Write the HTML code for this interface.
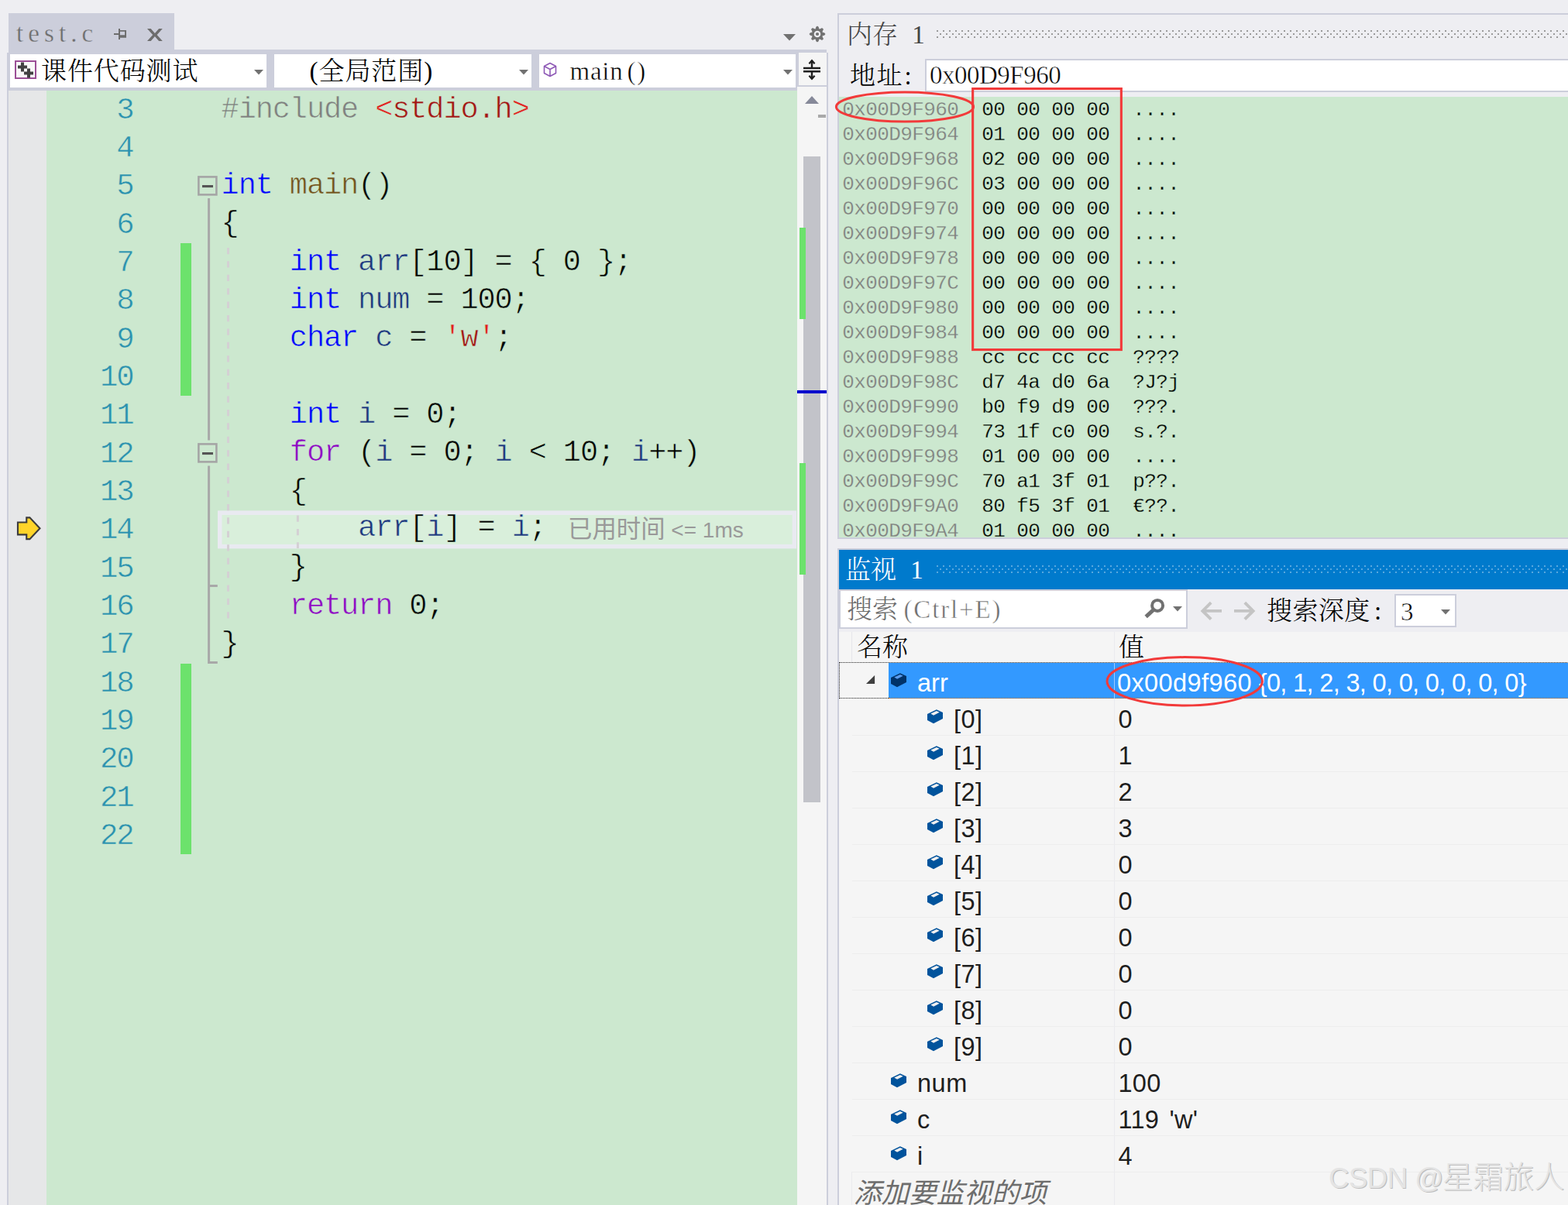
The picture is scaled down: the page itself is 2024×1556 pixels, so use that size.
<!DOCTYPE html>
<html lang="zh-CN">
<head>
<meta charset="utf-8">
<title>test.c - Visual Studio</title>
<style>
*{box-sizing:border-box;margin:0;padding:0}
html,body{width:2024px;height:1556px;overflow:hidden;background:#eeeef2}
body{position:relative;font-family:"Liberation Serif","Noto Serif CJK SC",serif;color:#000}
.a{position:absolute}
.t{position:absolute;white-space:pre;line-height:1}
.ui{font-family:"Liberation Serif","Noto Serif CJK SC",serif;font-size:33px;line-height:36px;font-weight:300}
.lat{font-family:"Liberation Serif",serif;font-size:33px;line-height:36px;-webkit-text-stroke:0.5px #fff}
.mono{font-family:"Liberation Mono",monospace}
.code{font-family:"Liberation Mono",monospace;font-size:38.6px;letter-spacing:-1.09px;line-height:49px;height:49px;white-space:pre;position:absolute;left:285.6px;-webkit-text-stroke:0.6px #cce8cf}
.ln{font-family:"Liberation Mono",monospace;font-size:39px;letter-spacing:-2.2px;line-height:49px;height:49px;position:absolute;left:60px;width:111.4px;margin-top:1.3px;text-align:right;color:#2b91af;white-space:pre;-webkit-text-stroke:0.55px #cce8cf}
.kw{color:#0000ff}.cf{color:#8f08c4}.id{color:#1f377f}.fn{color:#74531f}.st{color:#a31515}.sq{color:#e21f1f}.pp{color:#808080}
.mem{font-family:"Liberation Mono",monospace;font-size:26px;letter-spacing:-0.6px;line-height:32px;height:32px;white-space:pre;position:absolute;left:1088px;-webkit-text-stroke:0.3px #cce8cf}
.mem i{font-style:normal;color:#808080}
.w{position:absolute;font-family:"Liberation Sans",sans-serif;font-size:32.5px;line-height:47px;height:47px;white-space:pre;color:#1e1e1e}
.sep{position:absolute;left:1100px;width:924px;height:1px;background:#ededed}
</style>
</head>
<body>
<div id="editor">
<div class="a" style="left:11px;top:17px;width:214px;height:47px;background:#cccedb;"></div>
<div class="t lat" id="tabname" style="left:21px;top:25px;color:#6d6d6d;letter-spacing:6.1px;-webkit-text-stroke:0.4px #cccedb">test.c</div>
<svg class="a" style="left:145px;top:34px" width="22" height="20" viewBox="145 34 22 20"><g fill="#6d6d6d"><rect x="147" y="43" width="7" height="2"/><rect x="153" y="37" width="2" height="14"/><path d="M155 39h8v9.8h-8zM155 40.8v4.4h6.1v-4.4z" fill-rule="evenodd"/></g></svg>
<svg class="a" style="left:188px;top:35px" width="24" height="20" viewBox="188 35 24 20"><path d="M190 37h4.7L199.9 43.1L205.1 37h4.7L202.6 45L209.8 53h-4.7L199.9 46.9L194.7 53h-4.7L197.2 45Z" fill="#6d6d6d"/></svg>
<svg class="a" style="left:1011px;top:44px" width="16" height="9" viewBox="0 0 16 9"><path d="M0 0H16L8 8.5Z" fill="#717171"/></svg>
<svg class="a" style="left:1043px;top:32px" width="24" height="24" viewBox="-12 -12 24 24"><path d="M-2.44 -5.48L-0.85 -9.66L0.85 -9.66L2.44 -5.48ZM2.15 -5.60L6.24 -7.43L7.43 -6.24L5.60 -2.15ZM5.48 -2.44L9.66 -0.85L9.66 0.85L5.48 2.44ZM5.60 2.15L7.43 6.24L6.24 7.43L2.15 5.60ZM2.44 5.48L0.85 9.66L-0.85 9.66L-2.44 5.48ZM-2.15 5.60L-6.24 7.43L-7.43 6.24L-5.60 2.15ZM-5.48 2.44L-9.66 0.85L-9.66 -0.85L-5.48 -2.44ZM-5.60 -2.15L-7.43 -6.24L-6.24 -7.43L-2.15 -5.60Z" fill="#717171" stroke="#717171" stroke-width="1" stroke-linejoin="round"/><circle r="6.5" fill="#717171"/><circle r="4.3" fill="#eeeef2"/><circle r="2.1" fill="#717171"/></svg>
<div class="a" style="left:11px;top:64px;width:1056px;height:53px;background:#cccedb;"></div>
<div class="a" style="left:9px;top:68px;width:2px;height:1488px;background:#cccedb;"></div>
<div class="a" style="left:13px;top:70px;width:331px;height:43px;background:#fff;"></div>
<svg class="a" style="left:328px;top:90px" width="12" height="7" viewBox="0 0 12 7"><path d="M0 0H12L6 6.5Z" fill="#717171"/></svg>
<div class="a" style="left:354px;top:70px;width:332px;height:43px;background:#fff;"></div>
<svg class="a" style="left:670px;top:90px" width="12" height="7" viewBox="0 0 12 7"><path d="M0 0H12L6 6.5Z" fill="#717171"/></svg>
<div class="a" style="left:696px;top:70px;width:331px;height:43px;background:#fff;"></div>
<svg class="a" style="left:1011px;top:90px" width="12" height="7" viewBox="0 0 12 7"><path d="M0 0H12L6 6.5Z" fill="#717171"/></svg>
<svg class="a" style="left:19px;top:78px" width="28" height="24" viewBox="0 0 28 24"><rect x="1" y="1" width="26" height="22" fill="#f8f8f8" stroke="#9b4f96" stroke-width="2"/><path d="M8 2.5h4v4h4v4h-4v4h-4v-4h-4v-4h4zM16 10.5h4v4h4v4h-4v4h-4v-4h-4v-4h4z" fill="#424242"/></svg>
<div class="t ui" id="proj" style="left:53px;top:74px;letter-spacing:0.9px">课件代码测试</div>
<div class="t ui" id="scope" style="left:399.6px;top:74px;letter-spacing:0.9px">(全局范围<span style="margin-left:0.2px">)</span></div>
<svg class="a" style="left:701px;top:80px" width="18" height="20" viewBox="0 0 18 20"><path d="M9 1.5L16.5 5.5V14.5L9 18.5L1.5 14.5V5.5ZM1.5 5.5L9 9.5L16.5 5.5M9 9.5V18.5" fill="none" stroke="#8e59b6" stroke-width="1.6" stroke-linejoin="round"/></svg>
<div class="t lat" id="func" style="left:735.6px;top:74px;letter-spacing:0.7px">main<span style="margin-left:5.2px;letter-spacing:1.6px">()</span></div>
<div class="a" style="left:1031px;top:68px;width:36px;height:42px;background:#f5f5f5;"></div>
<svg class="a" style="left:1035px;top:75px" width="26" height="30" viewBox="0 0 26 30"><g stroke="#1e1e1e" fill="none" stroke-width="2.4"><path d="M2 13H24M2 17.2H24"/><path d="M13 3.4V13M13 17V26.6"/><path d="M9.4 7.2L13 3.2L16.6 7.2M9.4 22.8L13 26.8L16.6 22.8" stroke-width="2.2"/></g></svg>
<div class="a" style="left:11px;top:117px;width:49px;height:1439px;background:#e6e7e8;"></div>
<div class="a" style="left:60px;top:117px;width:969px;height:1439px;background:#cce8cf;"></div>
<div class="a" style="left:1029px;top:112px;width:38px;height:1444px;background:#f5f5f5;"></div>
<div class="a" style="left:1067px;top:68px;width:2px;height:1488px;background:#cccedb;"></div>
<svg class="a" style="left:1039px;top:124px" width="18" height="10" viewBox="0 0 18 10"><path d="M0 10H18L9 0Z" fill="#868999"/></svg>
<div class="a" style="left:1056px;top:148px;width:10px;height:4px;background:#a9a9a9;"></div>
<div class="a" style="left:1037px;top:202px;width:22px;height:834px;background:#c2c3c9;"></div>
<div class="a" style="left:1032px;top:294px;width:8px;height:118px;background:#6ce26c;"></div>
<div class="a" style="left:1032px;top:598px;width:8px;height:144px;background:#6ce26c;"></div>
<div class="a" style="left:1029px;top:504px;width:38px;height:4px;background:#0000cd;"></div>
<div class="a" style="left:233px;top:314px;width:14px;height:197px;background:#6ce26c;"></div>
<div class="a" style="left:233px;top:857px;width:14px;height:246px;background:#6ce26c;"></div>
<svg class="a" style="left:250px;top:220px" width="800" height="660" viewBox="250 220 800 660"><g fill="none" stroke="#a8a8a8" stroke-width="3"><path d="M269.6 256V568.6M269.6 601.6V857M269.6 756.5H280.8M269.6 855.5H280.8"/></g><rect x="283.75" y="662.15" width="741.6" height="43.5" fill="#d9efdb" stroke="#e9eaf1" stroke-width="5.5"/><g fill="none" stroke="#d4d0d4" stroke-width="3" stroke-dasharray="8.3 9.12"><path d="M294.5 319.9V798.5"/><path d="M384.4 665.5V708"/></g><rect x="256.4" y="228.4" width="23" height="23" fill="#cce8cf" stroke="#a5a5a5" stroke-width="2.6"/><rect x="261" y="239" width="14" height="3.1" fill="#555"/><rect x="256.4" y="573.4" width="23" height="23" fill="#cce8cf" stroke="#a5a5a5" stroke-width="2.6"/><rect x="261" y="584" width="14" height="3.1" fill="#555"/></svg>
<svg class="a" style="left:18px;top:662px" width="40" height="40" viewBox="18 662 40 40"><path d="M22.95 674.45H34.25V668.35H38.4L51.5 682.3L38.4 696.15H34.25V690.35H22.95Z" fill="#ffd42a" stroke="#3b3b3d" stroke-width="2.1" stroke-linejoin="miter"/></svg>
<div class="ln" style="top:117.50px">3</div>
<div class="code" style="top:117.50px"><span class="pp">#include</span> <span class="sq">&lt;</span><span class="st">stdio.h</span><span class="sq">&gt;</span></div>
<div class="ln" style="top:166.82px">4</div>
<div class="ln" style="top:216.14px">5</div>
<div class="code" style="top:216.14px"><span class="kw">int</span> <span class="fn">main</span>()</div>
<div class="ln" style="top:265.46px">6</div>
<div class="code" style="top:265.46px">{</div>
<div class="ln" style="top:314.78px">7</div>
<div class="code" style="top:314.78px">    <span class="kw">int</span> <span class="id">arr</span>[10] = { 0 };</div>
<div class="ln" style="top:364.10px">8</div>
<div class="code" style="top:364.10px">    <span class="kw">int</span> <span class="id">num</span> = 100;</div>
<div class="ln" style="top:413.42px">9</div>
<div class="code" style="top:413.42px">    <span class="kw">char</span> <span class="id">c</span> = <span class="sq">'</span><span class="st">w</span><span class="sq">'</span>;</div>
<div class="ln" style="top:462.74px">10</div>
<div class="ln" style="top:512.06px">11</div>
<div class="code" style="top:512.06px">    <span class="kw">int</span> <span class="id">i</span> = 0;</div>
<div class="ln" style="top:561.38px">12</div>
<div class="code" style="top:561.38px">    <span class="cf">for</span> (<span class="id">i</span> = 0; <span class="id">i</span> &lt; 10; <span class="id">i</span>++)</div>
<div class="ln" style="top:610.70px">13</div>
<div class="code" style="top:610.70px">    {</div>
<div class="ln" style="top:660.02px">14</div>
<div class="code" style="top:658.22px;-webkit-text-stroke-color:#d9efdb">        <span class="id">arr</span>[<span class="id">i</span>] = <span class="id">i</span>;</div>
<div class="ln" style="top:709.34px">15</div>
<div class="code" style="top:709.34px">    }</div>
<div class="ln" style="top:758.66px">16</div>
<div class="code" style="top:758.66px">    <span class="cf">return</span> 0;</div>
<div class="ln" style="top:807.98px">17</div>
<div class="code" style="top:807.98px">}</div>
<div class="ln" style="top:857.30px">18</div>
<div class="ln" style="top:906.62px">19</div>
<div class="ln" style="top:955.94px">20</div>
<div class="ln" style="top:1005.26px">21</div>
<div class="ln" style="top:1054.58px">22</div>
<div class="t" id="elapsed" style="left:733px;top:666px;font-family:'Liberation Sans','Noto Sans CJK SC',sans-serif;font-size:31.4px;line-height:36px;color:#999">已用时间<span style="font-size:28px"> &lt;= 1ms</span></div>
</div>
<div id="memory">
<div class="a" style="left:1081px;top:17px;width:943px;height:2px;background:#cccedb;"></div>
<div class="a" style="left:1081px;top:17px;width:2px;height:679px;background:#cccedb;"></div>
<div class="t ui" id="memtitle" style="left:1093px;top:27px;word-spacing:10px;color:#444">内存 1</div>
<svg class="a" style="left:1209px;top:39px" width="815" height="11" viewBox="0 0 815 11"><defs><pattern id="d1" width="8" height="8" patternUnits="userSpaceOnUse"><rect x="0" y="0" width="2" height="2" fill="#999"/><rect x="4" y="4" width="2" height="2" fill="#999"/></pattern></defs><rect width="815" height="10" fill="url(#d1)"/></svg>
<div class="t ui" id="addrlbl" style="left:1097px;top:80px;letter-spacing:1.5px">地址<span style="margin-left:1.6px">:</span></div>
<div class="a" style="left:1194px;top:76px;width:840px;height:43px;background:#fff;border:2px solid #cccedb"></div>
<div class="t lat" id="addr" style="left:1200px;top:79px;letter-spacing:-0.5px">0x00D9F960</div>
<div class="a" style="left:1083px;top:125px;width:941px;height:569px;background:#cce8cf;"></div>
<div class="a" style="left:1081px;top:694px;width:943px;height:2px;background:#cccedb;"></div>
<div class="a" style="left:1083px;top:125px;width:941px;height:569px;overflow:hidden">
<div class="mem" style="left:4.3px;top:1.4px"><i>0x00D9F960</i>  00 00 00 00  ....</div>
<div class="mem" style="left:4.3px;top:33.4px"><i>0x00D9F964</i>  01 00 00 00  ....</div>
<div class="mem" style="left:4.3px;top:65.4px"><i>0x00D9F968</i>  02 00 00 00  ....</div>
<div class="mem" style="left:4.3px;top:97.4px"><i>0x00D9F96C</i>  03 00 00 00  ....</div>
<div class="mem" style="left:4.3px;top:129.4px"><i>0x00D9F970</i>  00 00 00 00  ....</div>
<div class="mem" style="left:4.3px;top:161.4px"><i>0x00D9F974</i>  00 00 00 00  ....</div>
<div class="mem" style="left:4.3px;top:193.4px"><i>0x00D9F978</i>  00 00 00 00  ....</div>
<div class="mem" style="left:4.3px;top:225.4px"><i>0x00D9F97C</i>  00 00 00 00  ....</div>
<div class="mem" style="left:4.3px;top:257.4px"><i>0x00D9F980</i>  00 00 00 00  ....</div>
<div class="mem" style="left:4.3px;top:289.4px"><i>0x00D9F984</i>  00 00 00 00  ....</div>
<div class="mem" style="left:4.3px;top:321.4px"><i>0x00D9F988</i>  cc cc cc cc  ????</div>
<div class="mem" style="left:4.3px;top:353.4px"><i>0x00D9F98C</i>  d7 4a d0 6a  ?J?j</div>
<div class="mem" style="left:4.3px;top:385.4px"><i>0x00D9F990</i>  b0 f9 d9 00  ???.</div>
<div class="mem" style="left:4.3px;top:417.4px"><i>0x00D9F994</i>  73 1f c0 00  s.?.</div>
<div class="mem" style="left:4.3px;top:449.4px"><i>0x00D9F998</i>  01 00 00 00  ....</div>
<div class="mem" style="left:4.3px;top:481.4px"><i>0x00D9F99C</i>  70 a1 3f 01  p??.</div>
<div class="mem" style="left:4.3px;top:513.4px"><i>0x00D9F9A0</i>  80 f5 3f 01  €??.</div>
<div class="mem" style="left:4.3px;top:545.4px"><i>0x00D9F9A4</i>  01 00 00 00  ....</div>
</div>
<svg class="a" style="left:1070px;top:105px" width="400" height="360" viewBox="1070 105 400 360"><ellipse cx="1168" cy="138" rx="88.6" ry="19" fill="none" stroke="#f23a3a" stroke-width="3"/><rect x="1255.65" y="114.55" width="191.7" height="337" fill="none" stroke="#f23a3a" stroke-width="3.1"/></svg>
</div>
<div id="watch">
<div class="a" style="left:1081px;top:708px;width:943px;height:2px;background:#cccedb;"></div>
<div class="a" style="left:1081px;top:708px;width:2px;height:848px;background:#cccedb;"></div>
<div class="a" style="left:1083px;top:710px;width:941px;height:51px;background:#007acc;"></div>
<div class="t ui" id="watchtitle" style="left:1091px;top:718px;color:#fff;word-spacing:10px">监视 1</div>
<svg class="a" style="left:1209px;top:730px" width="815" height="11" viewBox="0 0 815 11"><defs><pattern id="d2" width="8" height="8" patternUnits="userSpaceOnUse"><rect x="0" y="0" width="2" height="2" fill="#59a8de"/><rect x="4" y="4" width="2" height="2" fill="#59a8de"/></pattern></defs><rect width="815" height="10" fill="url(#d2)"/></svg>
<div class="a" style="left:1083px;top:761px;width:450px;height:51px;background:#fff;border:2px solid #cccedb"></div>
<div class="t ui" id="search" style="left:1093px;top:769px;color:#6d6d6d">搜索<span style="letter-spacing:1.85px;margin-left:7.5px;-webkit-text-stroke:0.5px #fff">(Ctrl+E)</span></div>
<svg class="a" style="left:1474px;top:770px" width="32" height="30" viewBox="1474 770 32 30"><circle cx="1494.1" cy="781.9" r="7" fill="none" stroke="#717171" stroke-width="4"/><path d="M1490.4 786.2L1479.2 796.4" stroke="#717171" stroke-width="5" stroke-linecap="butt"/></svg>
<svg class="a" style="left:1514px;top:783px" width="12" height="7" viewBox="0 0 12 7"><path d="M0 0H12L6 6.5Z" fill="#717171"/></svg>
<svg class="a" style="left:1546px;top:774px" width="80" height="30" viewBox="1546 774 80 30"><g fill="none" stroke="#c4c4c4" stroke-width="3.9"><path d="M1552.6 788.9H1577M1563.2 778.2L1552.4 788.9L1563.2 799.6"/><path d="M1593 788.9H1617.4M1606.8 778.2L1617.6 788.9L1606.8 799.6"/></g></svg>
<div class="t ui" id="depthlbl" style="left:1635px;top:771px;letter-spacing:0.4px">搜索深度<span style="margin-left:5.5px">:</span></div>
<div class="a" style="left:1800px;top:767px;width:80px;height:43px;background:#fff;border:2px solid #cccedb"></div>
<div class="t lat" id="depth" style="left:1808px;top:772px">3</div>
<svg class="a" style="left:1860px;top:787px" width="12" height="7" viewBox="0 0 12 7"><path d="M0 0H12L6 6.5Z" fill="#717171"/></svg>
<div class="a" style="left:1083px;top:816px;width:941px;height:740px;background:#f5f5f5;"></div>
<div class="t ui" id="hname" style="left:1106px;top:818px">名称</div>
<div class="t ui" id="hval" style="left:1444px;top:818px">值</div>
<div class="a" style="left:1099px;top:816px;width:1px;height:39px;background:#e6e6ea;"></div>
<div class="a" style="left:1438px;top:816px;width:1px;height:740px;background:#ebebef;"></div>
<div class="a" style="left:1147px;top:856px;width:877px;height:46px;background:#3399ff;"></div>
<div class="a" style="left:1083px;top:855px;width:960px;height:47px;border:1px dotted #222"></div>
<div class="a" style="left:1147px;top:901px;width:900px;height:0;border-top:1px dotted #d07018"></div>
<div class="a" style="left:1438px;top:856px;width:1px;height:46px;background:#9fcbff;"></div>
<svg class="a" style="left:1117px;top:871px" width="14" height="14" viewBox="1117 871 14 14"><path d="M1129.1 872.1V883H1118Z" fill="#404040"/></svg>
<svg class="a" style="left:1149px;top:868px" width="22" height="22" viewBox="0 0 22 22"><path d="M1 7.1L12.9 1.2L21 5.1V12.9L9 19.2L1 15Z" fill="#00336a"/><path d="M5.3 6.6L12.9 3L16.7 4.8L9.1 8.8Z" fill="#5a9cf0"/></svg>
<div class="w" style="left:1184px;top:859px;color:#fff">arr</div>
<div class="w" id="arrval" style="left:1442px;top:859px;color:#fff;letter-spacing:0.4px">0x00d9f960 <span style="letter-spacing:-0.66px;margin-left:-0.6px">{0, 1, 2, 3, 0, 0, 0, 0, 0, 0}</span></div>
<svg class="a" style="left:1196px;top:915px" width="22" height="22" viewBox="0 0 22 22"><path d="M1 7.1L12.9 1.2L21 5.1V12.9L9 19.2L1 15Z" fill="#00539c"/><path d="M5.3 6.6L12.9 3L16.7 4.8L9.1 8.8Z" fill="#f0f0f0"/></svg>
<div class="w" style="left:1231px;top:906px;letter-spacing:0.5px">[0]</div>
<div class="w" style="left:1443.5px;top:906px;word-spacing:4px;letter-spacing:0.3px">0</div>
<div class="sep" style="top:949px"></div>
<svg class="a" style="left:1196px;top:962px" width="22" height="22" viewBox="0 0 22 22"><path d="M1 7.1L12.9 1.2L21 5.1V12.9L9 19.2L1 15Z" fill="#00539c"/><path d="M5.3 6.6L12.9 3L16.7 4.8L9.1 8.8Z" fill="#f0f0f0"/></svg>
<div class="w" style="left:1231px;top:953px;letter-spacing:0.5px">[1]</div>
<div class="w" style="left:1443.5px;top:953px;word-spacing:4px;letter-spacing:0.3px">1</div>
<div class="sep" style="top:996px"></div>
<svg class="a" style="left:1196px;top:1009px" width="22" height="22" viewBox="0 0 22 22"><path d="M1 7.1L12.9 1.2L21 5.1V12.9L9 19.2L1 15Z" fill="#00539c"/><path d="M5.3 6.6L12.9 3L16.7 4.8L9.1 8.8Z" fill="#f0f0f0"/></svg>
<div class="w" style="left:1231px;top:1000px;letter-spacing:0.5px">[2]</div>
<div class="w" style="left:1443.5px;top:1000px;word-spacing:4px;letter-spacing:0.3px">2</div>
<div class="sep" style="top:1043px"></div>
<svg class="a" style="left:1196px;top:1056px" width="22" height="22" viewBox="0 0 22 22"><path d="M1 7.1L12.9 1.2L21 5.1V12.9L9 19.2L1 15Z" fill="#00539c"/><path d="M5.3 6.6L12.9 3L16.7 4.8L9.1 8.8Z" fill="#f0f0f0"/></svg>
<div class="w" style="left:1231px;top:1047px;letter-spacing:0.5px">[3]</div>
<div class="w" style="left:1443.5px;top:1047px;word-spacing:4px;letter-spacing:0.3px">3</div>
<div class="sep" style="top:1090px"></div>
<svg class="a" style="left:1196px;top:1103px" width="22" height="22" viewBox="0 0 22 22"><path d="M1 7.1L12.9 1.2L21 5.1V12.9L9 19.2L1 15Z" fill="#00539c"/><path d="M5.3 6.6L12.9 3L16.7 4.8L9.1 8.8Z" fill="#f0f0f0"/></svg>
<div class="w" style="left:1231px;top:1094px;letter-spacing:0.5px">[4]</div>
<div class="w" style="left:1443.5px;top:1094px;word-spacing:4px;letter-spacing:0.3px">0</div>
<div class="sep" style="top:1137px"></div>
<svg class="a" style="left:1196px;top:1150px" width="22" height="22" viewBox="0 0 22 22"><path d="M1 7.1L12.9 1.2L21 5.1V12.9L9 19.2L1 15Z" fill="#00539c"/><path d="M5.3 6.6L12.9 3L16.7 4.8L9.1 8.8Z" fill="#f0f0f0"/></svg>
<div class="w" style="left:1231px;top:1141px;letter-spacing:0.5px">[5]</div>
<div class="w" style="left:1443.5px;top:1141px;word-spacing:4px;letter-spacing:0.3px">0</div>
<div class="sep" style="top:1184px"></div>
<svg class="a" style="left:1196px;top:1197px" width="22" height="22" viewBox="0 0 22 22"><path d="M1 7.1L12.9 1.2L21 5.1V12.9L9 19.2L1 15Z" fill="#00539c"/><path d="M5.3 6.6L12.9 3L16.7 4.8L9.1 8.8Z" fill="#f0f0f0"/></svg>
<div class="w" style="left:1231px;top:1188px;letter-spacing:0.5px">[6]</div>
<div class="w" style="left:1443.5px;top:1188px;word-spacing:4px;letter-spacing:0.3px">0</div>
<div class="sep" style="top:1231px"></div>
<svg class="a" style="left:1196px;top:1244px" width="22" height="22" viewBox="0 0 22 22"><path d="M1 7.1L12.9 1.2L21 5.1V12.9L9 19.2L1 15Z" fill="#00539c"/><path d="M5.3 6.6L12.9 3L16.7 4.8L9.1 8.8Z" fill="#f0f0f0"/></svg>
<div class="w" style="left:1231px;top:1235px;letter-spacing:0.5px">[7]</div>
<div class="w" style="left:1443.5px;top:1235px;word-spacing:4px;letter-spacing:0.3px">0</div>
<div class="sep" style="top:1278px"></div>
<svg class="a" style="left:1196px;top:1291px" width="22" height="22" viewBox="0 0 22 22"><path d="M1 7.1L12.9 1.2L21 5.1V12.9L9 19.2L1 15Z" fill="#00539c"/><path d="M5.3 6.6L12.9 3L16.7 4.8L9.1 8.8Z" fill="#f0f0f0"/></svg>
<div class="w" style="left:1231px;top:1282px;letter-spacing:0.5px">[8]</div>
<div class="w" style="left:1443.5px;top:1282px;word-spacing:4px;letter-spacing:0.3px">0</div>
<div class="sep" style="top:1325px"></div>
<svg class="a" style="left:1196px;top:1338px" width="22" height="22" viewBox="0 0 22 22"><path d="M1 7.1L12.9 1.2L21 5.1V12.9L9 19.2L1 15Z" fill="#00539c"/><path d="M5.3 6.6L12.9 3L16.7 4.8L9.1 8.8Z" fill="#f0f0f0"/></svg>
<div class="w" style="left:1231px;top:1329px;letter-spacing:0.5px">[9]</div>
<div class="w" style="left:1443.5px;top:1329px;word-spacing:4px;letter-spacing:0.3px">0</div>
<div class="sep" style="top:1372px"></div>
<svg class="a" style="left:1149px;top:1385px" width="22" height="22" viewBox="0 0 22 22"><path d="M1 7.1L12.9 1.2L21 5.1V12.9L9 19.2L1 15Z" fill="#00539c"/><path d="M5.3 6.6L12.9 3L16.7 4.8L9.1 8.8Z" fill="#f0f0f0"/></svg>
<div class="w" style="left:1184px;top:1376px;letter-spacing:0.5px">num</div>
<div class="w" style="left:1443.5px;top:1376px;word-spacing:4px;letter-spacing:0.3px">100</div>
<div class="sep" style="top:1419px"></div>
<svg class="a" style="left:1149px;top:1432px" width="22" height="22" viewBox="0 0 22 22"><path d="M1 7.1L12.9 1.2L21 5.1V12.9L9 19.2L1 15Z" fill="#00539c"/><path d="M5.3 6.6L12.9 3L16.7 4.8L9.1 8.8Z" fill="#f0f0f0"/></svg>
<div class="w" style="left:1184px;top:1423px;letter-spacing:0.5px">c</div>
<div class="w" style="left:1443.5px;top:1423px;word-spacing:4px;letter-spacing:0.3px">119 'w'</div>
<div class="sep" style="top:1466px"></div>
<svg class="a" style="left:1149px;top:1479px" width="22" height="22" viewBox="0 0 22 22"><path d="M1 7.1L12.9 1.2L21 5.1V12.9L9 19.2L1 15Z" fill="#00539c"/><path d="M5.3 6.6L12.9 3L16.7 4.8L9.1 8.8Z" fill="#f0f0f0"/></svg>
<div class="w" style="left:1184px;top:1470px;letter-spacing:0.5px">i</div>
<div class="w" style="left:1443.5px;top:1470px;word-spacing:4px;letter-spacing:0.3px">4</div>
<div class="sep" style="top:1513px"></div>
<div class="sep" style="top:902px"></div>
<div class="t" id="additem" style="left:1102px;top:1520.5px;font-family:'Liberation Sans','Noto Sans CJK SC',sans-serif;font-size:35.6px;line-height:40px;font-style:italic;color:#6d6d6d">添加要监视的项</div>
<div class="a" style="left:1099px;top:1513px;width:1px;height:43px;background:#ebebee;"></div>
<svg class="a" style="left:1400px;top:840px" width="260" height="80" viewBox="1400 840 260 80"><ellipse cx="1529.2" cy="879.8" rx="100.2" ry="31.2" fill="none" stroke="#f23a3a" stroke-width="3"/></svg>
<div class="t" id="wm" style="left:1715px;top:1498px;font-family:'Liberation Sans','Noto Sans CJK SC',sans-serif;font-size:36.4px;line-height:44px;color:#e4e4e4;text-shadow:1.2px 1.2px 0.6px #bebebe;letter-spacing:-0.4px">CSDN @<span style="font-size:39.4px;font-weight:300;letter-spacing:0;margin-left:-1px">星霜旅人</span></div>
</div>
</body>
</html>
